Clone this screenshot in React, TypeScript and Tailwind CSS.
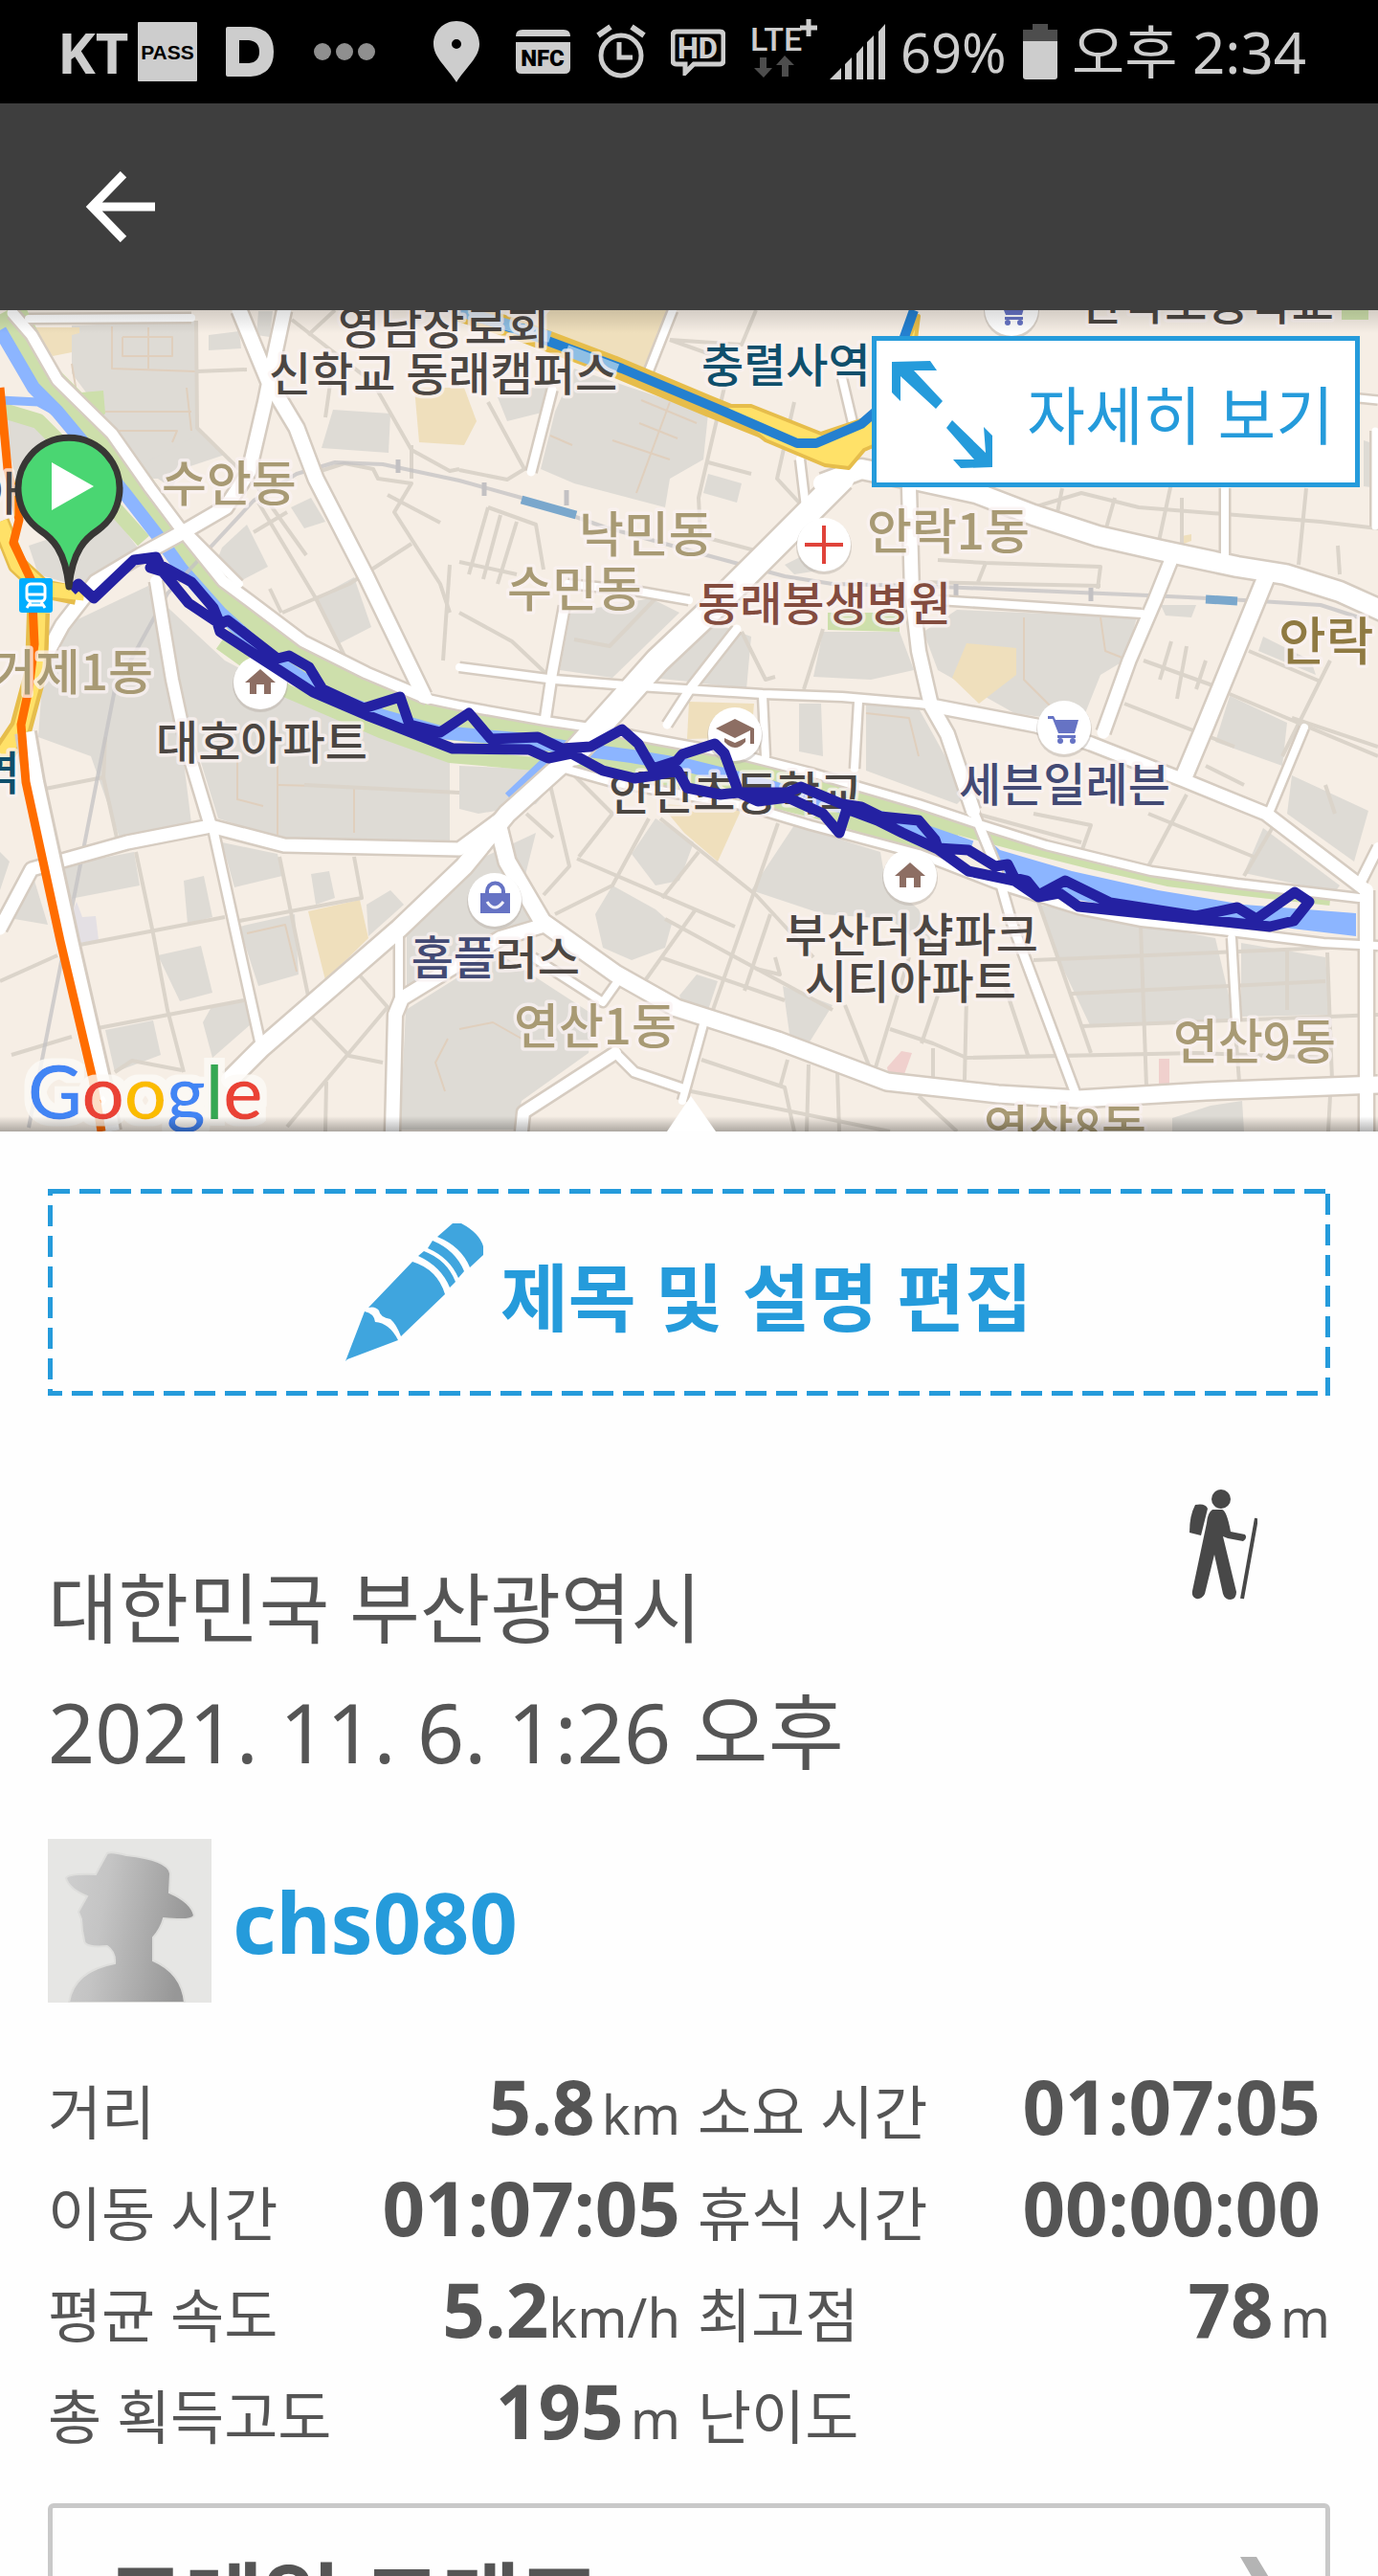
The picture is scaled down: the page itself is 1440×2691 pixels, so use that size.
import React from "react";

const KR = '"Noto Sans CJK KR", sans-serif';

/* ------------------------------------------------------------------ */
/* Map data                                                            */
/* ------------------------------------------------------------------ */

const blocks = [
  "75,340 205,335 205,448 235,475 160,500 120,450 75,390",
  "120,500 205,455 180,510 165,500",
  "218,350 250,346 252,364 218,366",
  "270,325 285,325 282,352 268,350",
  "348,428 408,432 406,473 336,468",
  "304,530 325,520 340,545 318,552",
  "232,572 258,548 280,592 238,614 225,590",
  "330,625 370,603 388,655 355,672",
  "0,420 40,440 60,480 20,520 12,480",
  "30,570 120,540 146,575 80,612 40,600",
  "165,625 235,690 320,735 425,780 470,790 470,878 300,878 228,855 205,780 175,680",
  "75,650 155,612 165,650 185,740 200,860 125,875 95,790 40,770 45,700",
  "57,906 140,890 146,925 68,940",
  "192,920 213,915 222,958 196,965",
  "165,998 210,988 222,1037 188,1046",
  "250,968 308,955 312,1018 270,1030",
  "232,880 290,892 295,915 245,927",
  "325,913 344,910 350,938 330,945",
  "110,1076 160,1066 168,1102 120,1120",
  "212,1068 222,1050 255,1045 262,1070 222,1105",
  "383,945 408,930 422,945 385,978",
  "15,960 33,910 50,966",
  "425,970 485,905 560,870 545,930 560,965 500,985 425,1035",
  "424,1055 520,995 620,1060 615,1100 545,1150 538,1180 418,1180",
  "480,800 590,805 560,840 500,850 480,845",
  "600,385 740,432 735,480 700,500 695,530 600,505 565,490 580,430",
  "740,495 775,505 770,525 735,515",
  "520,415 575,400 570,430 530,440",
  "596,640 680,625 710,640 640,708 585,700",
  "745,650 785,665 780,720 720,712 680,708",
  "860,660 940,660 955,700 910,710 850,707",
  "820,590 850,575 862,595 830,600",
  "1000,637 1188,645 1175,690 1150,705 1130,755 1060,745 980,700 965,660",
  "1213,632 1250,632 1245,645 1218,643",
  "835,735 858,735 860,790 835,785",
  "905,735 960,740 1010,830 1000,840 905,805",
  "1320,665 1370,690 1375,705 1315,680",
  "1425,460 1440,465 1440,510 1425,508",
  "1285,727 1345,755 1340,800 1270,775",
  "1350,810 1430,847 1415,900 1345,850",
  "1320,865 1400,925 1395,932 1300,912",
  "660,892 685,855 725,880 710,920 685,925",
  "622,955 640,925 685,950 702,965 695,990 660,1003 630,990",
  "710,1040 728,1018 750,1025 740,1055 712,1045",
  "830,862 920,890 925,920 960,950 980,1000 930,960 860,955 785,930",
  "818,1030 870,1050 845,1090 825,1080",
  "1085,945 1270,980 1290,1065 1140,1073 1110,1010",
  "1297,985 1385,1000 1390,1060 1297,1062",
  "1265,1155 1298,1150 1300,1182 1225,1182 1225,1168",
  "0,890 10,900 0,930",
];

const sand = [
  "35,342 83,342 83,348 75,350 75,368 55,372",
  "575,324 703,324 675,390 560,340",
  "433,405 485,405 498,440 485,465 438,462",
  "1010,672 1062,677 1062,705 1023,735 995,708",
  "322,952 376,940 385,980 340,1024",
  "690,840 775,845 750,900 715,870",
  "720,733 788,735 785,770 718,772",
  "1235,560 1245,558 1245,565 1232,570",
];

const parks = [
  "85,410 108,408 110,432 100,440",
  "865,640 940,640 940,660 865,658",
  "1402,324 1430,324 1430,334 1402,334",
];

const minor = [
  "205,335 206,447 270,510 320,580",
  "205,388 258,386",
  "305,334 390,400 430,470 470,492 480,490",
  "350,324 322,350",
  "348,380 340,436",
  "335,492 360,484 390,490 395,500 430,505 412,535 460,610 470,640",
  "405,517 460,546",
  "430,465 430,500",
  "270,525 330,625 360,685",
  "265,556 300,535",
  "295,640 365,610 430,568",
  "282,615 294,640",
  "470,590 463,690",
  "480,640 535,670 570,703",
  "510,530 560,548 568,595",
  "510,530 490,600",
  "523,538 505,605",
  "540,545 520,610",
  "480,587 540,600",
  "510,420 548,490 530,501 480,491",
  "700,355 770,380",
  "790,324 775,360 700,355",
  "758,400 730,520 732,560 800,578",
  "740,483 785,495",
  "830,420 812,500 835,525",
  "775,660 800,710 810,707",
  "600,668 637,675 690,620",
  "860,657 840,720",
  "1025,513 1080,530 1130,515 1190,530 1380,545 1440,552",
  "1110,510 1103,545",
  "1165,520 1155,555",
  "1225,500 1210,570",
  "1235,520 1235,575",
  "1365,510 1357,590",
  "1398,570 1400,600",
  "980,585 1030,588 1150,592 1147,615",
  "1030,588 1022,608",
  "960,608 1150,612",
  "1195,690 1270,717",
  "1175,735 1290,780",
  "1240,675 1230,730",
  "1224,670 1212,710",
  "1260,690 1250,720",
  "1305,680 1380,712",
  "1390,690 1340,790",
  "1285,725 1440,790",
  "1260,800 1300,820",
  "1385,820 1395,850",
  "1330,864 1300,915",
  "1020,850 1130,880",
  "1080,850 1140,862 1130,890",
  "1200,850 1310,895",
  "1240,830 1200,905",
  "1350,750 1440,780",
  "42,825 108,812 122,875",
  "110,770 108,815",
  "78,988 235,958",
  "142,890 160,975 175,1055 192,1120",
  "97,1075 255,1045",
  "292,895 322,1040",
  "250,962 378,938 370,895",
  "318,820 480,828",
  "0,1025 60,998",
  "12,1102 75,1083",
  "325,1062 365,1103 400,1110",
  "375,1018 405,1052 300,1177",
  "341,1130 340,1182",
  "120,1120 138,1108 190,1118",
  "575,820 595,905 568,935",
  "600,810 640,850 605,895",
  "550,850 578,875",
  "603,897 768,968",
  "678,855 640,925 580,955",
  "690,855 790,935 850,1000",
  "730,890 692,938",
  "813,860 745,1055",
  "727,950 675,1023",
  "695,960 870,1055",
  "690,1000 820,1045",
  "805,955 778,1035",
  "810,1000 815,1018 790,1012",
  "733,1107 820,1136 830,1182",
  "823,1107 815,1136",
  "722,1140 930,1182",
  "845,1112 843,1182",
  "875,1120 877,1182",
  "883,1050 908,1113",
  "950,1000 915,1115",
  "930,1075 975,1090 1010,1105 1250,1100 1390,1105",
  "1050,1030 1075,1105",
  "1010,1040 1008,1128",
  "980,1040 963,1090",
  "975,1095 975,1125",
  "1080,1003 1390,990",
  "1192,968 1198,1135",
  "1085,942 1140,1100",
  "1120,1038 1385,1025",
  "1345,990 1345,1055",
  "1387,995 1392,1128",
  "1290,1065 1295,1130",
  "1130,1072 1440,1060",
  "1390,1145 1388,1182",
  "960,1145 1000,1182",
];

const alleys = [
  "117,341 117,385 205,388",
  "128,352 180,352 180,372 128,372 128,352",
  "155,342 155,385",
  "75,380 85,440",
  "110,430 200,430",
  "115,450 185,450 180,462",
  "195,405 200,450",
  "575,455 598,465",
  "670,418 728,442",
  "668,442 708,458",
  "700,420 665,515",
  "640,460 700,480",
  "1070,645 1070,710 1100,740",
  "1150,645 1155,680 1180,690",
  "248,790 248,835 275,842",
  "290,800 290,875",
  "290,820 370,822 370,870",
  "258,975 298,966 310,1015",
  "468,1085 455,1110 465,1140",
  "480,1075 515,1068 545,1085",
  "905,745 950,750 960,790",
];

const roads: { w: number; d: string }[] = [
  { w: 8, d: "30,333 200,332" },
  { w: 8, d: "703,324 677,390" },
  { w: 9, d: "577,407 555,493" },
  { w: 8, d: "593,610 663,617 720,627" },
  { w: 8, d: "880,395 893,450" },
  { w: 8, d: "836,480 842,530" },
  { w: 10, d: "590,633 577,703 570,750" },
  { w: 9, d: "770,657 723,717 697,757" },
  { w: 12, d: "163,607 170,650 180,710 195,780 220,863" },
  { w: 9, d: "222,863 247,977 272,1090" },
  { w: 13, d: "0,970 33,908 133,880 220,863 297,883 480,887 530,850" },
  { w: 8, d: "417,977 417,1050" },
  { w: 8, d: "557,1000 630,1047 647,1023" },
  { w: 9, d: "643,1100 663,1120 713,1137" },
  { w: 12, d: "643,1100 547,1162 545,1182" },
  { w: 8, d: "735,1070 713,1150" },
  { w: 14, d: "567,967 523,980 420,1043 413,1060 410,1182" },
  { w: 8, d: "1287,980 1292,1067" },
  { w: 8, d: "1363,760 1327,847" },
  { w: 8, d: "1280,510 1280,585" },
  { w: 7, d: "1420,416 1440,418" },
  { w: 7, d: "1437,450 1437,550" },
  { w: 8, d: "980,627 1193,641" },
  { w: 8, d: "797,727 800,790" },
  { w: 8, d: "897,733 893,803" },
  { w: 8, d: "480,697 580,710 667,717 797,725 880,728 960,735 977,737" },
  { w: 11, d: "13,327 33,350 60,397 117,453 157,510 187,550 233,607 260,627 317,670 383,703 447,730" },
  { w: 8, d: "200,560 250,610" },
  { w: 8, d: "447,730 480,737 570,753 630,762 687,773 780,790 847,807 960,840 1020,860 1093,883 1203,910 1293,923 1420,938" },
  { w: 8, d: "590,803 640,817 780,842 847,862 960,892 1040,923 1127,950 1193,963 1277,972 1383,985 1440,988" },
  { w: 15, d: "250,324 280,397 310,447 330,500 383,603 443,727" },
  { w: 14, d: "297,324 285,380 277,420 260,493 236,530 193,555 147,580 100,608 65,653 45,690" },
  { w: 14, d: "950,510 953,620 960,680 973,737 990,767 1017,847" },
  { w: 9, d: "1017,847 1040,903 1057,963 1123,1140" },
  { w: 13, d: "973,737 1083,758 1140,777 1237,815 1323,850 1425,928" },
  { w: 13, d: "1223,587 1207,627 1180,690 1153,765" },
  { w: 17, d: "1323,603 1260,757 1237,812" },
  { w: 10, d: "1420,925 1440,885" },
  { w: 14, d: "1428,930 1428,1182" },
  { w: 17, d: "520,860 530,900 567,963 643,1017 707,1053 813,1087 927,1130 1043,1143 1127,1148 1260,1140 1440,1133" },
  { w: 18, d: "240,1128 273,1095 417,970 485,905 530,850 600,787" },
  { w: 25, d: "600,787 647,735 687,690 740,640 800,580 840,540 880,500" },
  { w: 20, d: "860,505 900,490 960,502 1020,515 1080,538 1147,560 1213,575 1293,592 1343,600 1400,618 1460,645" },
];

const track =
  "75,617 82,610 98,625 140,585 163,582 167,590 200,608 223,635 230,652 238,648 290,688 302,685 323,697 337,720 380,740 418,728 428,757 460,765 490,745 513,772 562,770 587,782 617,780 650,762 667,777 682,803 707,795 713,788 747,777 757,787 772,828 823,828 837,822 880,840 900,843 920,853 960,857 977,877 980,886 1012,888 1040,905 1053,903 1060,917 1073,920 1085,935 1113,920 1160,943 1250,957 1293,948 1313,960 1353,932 1368,942 1352,962 1327,968 1250,960 1127,947 1107,933 1085,937 1060,920 1012,910 980,887 943,870 917,857 885,845 877,870 860,850 823,833 792,837 772,828 753,830 718,823 708,805 685,810 663,813 630,805 597,787 573,792 553,783 480,782 473,782 383,747 327,723 230,660 227,650 197,630 170,597 157,593 163,584";

const river =
  "0,345 35,405 60,430 100,478 130,515 165,560 190,595 230,640 280,685 340,725 400,748 460,765 540,772 600,782 660,790 720,800 780,815 840,832 900,848 960,866 1015,885";

type Label = {
  x: number;
  y: number;
  t: string;
  c: string;
  s?: number;
  end?: boolean;
};

const DISTRICT = "#a89a74";
const DARK = "#4b4642";
const SHOP = "#434a74";
const STATION = "#0f4f6c";

const labels: Label[] = [
  { x: 353, y: 359, t: "영남장로회", c: DARK },
  { x: 281, y: 408, t: "신학교 동래캠퍼스", c: DARK },
  { x: 733, y: 399, t: "충렬사역", c: STATION },
  { x: 1129, y: 334, t: "안락초등학교", c: DARK },
  { x: 169, y: 524, t: "수안동", c: DISTRICT, s: 51 },
  { x: 160, y: 721, t: "거제1동", c: DISTRICT, s: 51, end: true },
  { x: 605, y: 577, t: "낙민동", c: DISTRICT, s: 51 },
  { x: 530, y: 634, t: "수민동", c: DISTRICT, s: 51 },
  { x: 906, y: 574, t: "안락1동", c: DISTRICT, s: 51 },
  { x: 729, y: 648, t: "동래봉생병원", c: "#834c3f" },
  { x: 1336, y: 690, t: "안락", c: "#8f7a42", s: 54 },
  { x: 163, y: 793, t: "대호아파트", c: DARK },
  { x: 636, y: 846, t: "안민초등학교", c: DARK },
  { x: 1002, y: 837, t: "세븐일레븐", c: SHOP },
  { x: 606, y: 1018, t: "러스", c: DARK, end: true },
  { x: 518, y: 1018, t: "홈플", c: SHOP, end: true },
  { x: 820, y: 994, t: "부산더샵파크", c: DARK },
  { x: 841, y: 1043, t: "시티아파트", c: DARK },
  { x: 537, y: 1091, t: "연산1동", c: DISTRICT, s: 51 },
  { x: 1226, y: 1107, t: "연산9동", c: DISTRICT, s: 51 },
  { x: 1028, y: 1197, t: "연산8동", c: DISTRICT, s: 51 },
  { x: 21, y: 825, t: "역", c: STATION, end: true },
  { x: 20, y: 533, t: "아", c: DARK, end: true },
];

/* ------------------------------------------------------------------ */
/* Map drawing                                                         */
/* ------------------------------------------------------------------ */

function Disc({ x, y, children }: { x: number; y: number; children: React.ReactNode }) {
  return (
    <g transform={`translate(${x} ${y})`}>
      <circle cy="2" r="29" fill="#b9b2a9" opacity="0.5" />
      <circle r="28" fill="#fff" />
      {children}
    </g>
  );
}

const House = () => (
  <path d="M0-14 16 0H11V12H4V2H-4V12H-11V0H-16Z" fill="#8d6e63" />
);

const Cart = () => (
  <g fill="#6673c4">
    <path d="M-17-12H-11L-9-8H15L11 6H-6L-12-9H-17Z" />
    <path d="M-7 8H12V11H-7Z" />
    <circle cx="-4" cy="14" r="3" />
    <circle cx="9" cy="14" r="3" />
  </g>
);

function RouteMap() {
  return (
    <svg
      viewBox="0 324 1440 858"
      preserveAspectRatio="xMidYMid slice"
      className="block h-full w-full"
      role="img"
      aria-label="경로 지도"
    >
      <defs>
        <linearGradient id="shadeTop" x1="0" y1="0" x2="0" y2="1">
          <stop offset="0" stopColor="#000" stopOpacity="0.14" />
          <stop offset="1" stopColor="#000" stopOpacity="0" />
        </linearGradient>
        <linearGradient id="shadeBottom" x1="0" y1="0" x2="0" y2="1">
          <stop offset="0" stopColor="#000" stopOpacity="0" />
          <stop offset="1" stopColor="#000" stopOpacity="0.3" />
        </linearGradient>
        <filter id="halo" x="-10%" y="-20%" width="120%" height="140%">
          <feMorphology in="SourceAlpha" operator="dilate" radius="7" result="grown" />
          <feFlood floodColor="#fcfaf6" floodOpacity="0.8" />
          <feComposite in2="grown" operator="in" />
          <feMerge>
            <feMergeNode />
            <feMergeNode in="SourceGraphic" />
          </feMerge>
        </filter>
      </defs>
      <rect x="0" y="324" width="1440" height="858" fill="#f6eee5" />
      {blocks.map((p) => (
        <polygon key={p} points={p} fill="#dedbd5" />
      ))}
      {sand.map((p) => (
        <polygon key={p} points={p} fill="#efdfbc" />
      ))}
      {parks.map((p) => (
        <polygon key={p} points={p} fill="#cddfab" />
      ))}
      <polygon points="73,960 80,942 86,958 100,957 103,982 78,986" fill="#e4e0e4" />
      <polygon points="927,1115 942,1098 953,1100 945,1122 928,1120" fill="#f0d0cd" />
      <rect x="1211" y="1106" width="11" height="26" fill="#f0d0cd" />

      <g fill="none" strokeLinejoin="round">
        {alleys.map((p) => (
          <polyline key={p} points={p} stroke="#e0cfbd" strokeWidth="2" />
        ))}
        {minor.map((p) => (
          <polyline key={p} points={p} stroke="#dbd4ca" strokeWidth="4" />
        ))}

        {/* river banks and water */}
        <polyline
          points="8,324 45,395 90,440 130,490 170,545 215,605 260,655 340,710 400,738 470,755 560,765 660,785 780,810 900,845 1000,876"
          stroke="#cddfab"
          strokeWidth="36"
        />
        <polyline
          points="0,428 40,440 70,470 110,520 150,565"
          stroke="#cddfab"
          strokeWidth="16"
        />
        <polyline
          points="1000,866 1060,882 1140,902 1220,920 1300,930 1390,940"
          stroke="#cddfab"
          strokeWidth="12"
        />
        <polyline
          points="230,672 300,722 400,765 470,790 560,798 640,805 760,825 860,850 980,888"
          stroke="#cddfab"
          strokeWidth="14"
        />
        <polyline points="0,418 40,420 62,432" stroke="#8cb5ff" strokeWidth="9" />
        <polyline points={river} stroke="#8cb5ff" strokeWidth="14" />
        <polyline points="572,795 532,833" stroke="#8cb5ff" strokeWidth="12" />
        <polygon
          points="1030,875 1045,888 1120,910 1210,930 1300,945 1417,954 1417,978 1350,970 1300,962 1180,950 1100,935 1045,912"
          fill="#8cb5ff"
        />

        {/* railway */}
        <g stroke="#c3c1c3">
          <polyline points="30,1178 120,720 175,620 265,523 310,495 350,483 400,485 480,502 545,520 630,550 720,575 820,602 870,610 960,612 1200,622 1300,627 1380,632 1420,645" strokeWidth="4" opacity="0.75" />
          <path d="M416 480v14M506 504v14M592 512v16M999 610v14M1140 614v14" strokeWidth="5" />
        </g>
        <path d="M545 522 602 538M1260 626 1293 628" stroke="#7aa7cc" strokeWidth="9" />

        {roads.map((r) => (
          <polyline key={r.d} points={r.d} stroke="#d6ccc1" strokeWidth={r.w + 5} />
        ))}
        {roads.map((r) => (
          <polyline key={r.d} points={r.d} stroke="#fff" strokeWidth={r.w} strokeLinecap="round" />
        ))}

        {/* trunk roads */}
        <polyline points="480,325 545,346 640,382 740,424 800,448 850,464" stroke="#e6bd4b" strokeWidth="22" />
        <path d="M755 424 785 424 858 453 915 434 960 330 945 452 903 470 887 489 862 486 800 460Z" fill="#ffe168" stroke="#e6bd4b" strokeWidth="4" />
        <polyline points="480,325 545,346 650,385 750,427 833,463 853,463 900,443 915,430 935,380 955,324" stroke="#2480d0" strokeWidth="10" />
        <path d="M480 325 575 352M592 366 645 386" stroke="#8fbfe4" strokeWidth="12" />

        <polyline points="0,545 18,590 45,615 80,622" stroke="#e6bd4b" strokeWidth="20" />
        <polyline points="0,545 18,590 45,615 88,620" stroke="#ffe168" strokeWidth="15" />
        <polyline points="40,640 38,700 22,760 -5,800" stroke="#e6bd4b" strokeWidth="24" />
        <polyline points="40,640 38,700 22,760 -5,800" stroke="#ffe168" strokeWidth="15" />
        <polyline points="27,765 36,817 72,983 108,1140 116,1182" stroke="#d6ccc1" strokeWidth="24" />
        <polyline points="27,765 36,817 72,983 108,1140 116,1182" stroke="#fff" strokeWidth="18" />
        <polyline points="0,405 8,490 20,543 14,567 33,607 36,673 30,720 22,757 27,817 63,983 97,1127 106,1182" stroke="#ff6d00" strokeWidth="9" />
      </g>

      {/* place names */}
      <g
        stroke="#faf2f2"
        strokeWidth="7"
        strokeLinejoin="round"
        fontWeight="500"
        style={{ fontFamily: KR, paintOrder: "stroke" }}
      >
        {labels.map((l) => (
          <text
            key={l.t + l.y}
            x={l.x}
            y={l.y}
            fontSize={l.s ?? 48}
            fill={l.c}
            textAnchor={l.end ? "end" : "start"}
            strokeOpacity="0.75"
          >
            {l.t}
          </text>
        ))}
      </g>

      <Disc x={272} y={713}><House /></Disc>
      <Disc x={951} y={915}><House /></Disc>
      <Disc x={1112} y={760}><Cart /></Disc>
      <Disc x={1057} y={323}><Cart /></Disc>
      <Disc x={861} y={569}>
        <path d="M0-20V20M-20 0H20" stroke="#e0433a" strokeWidth="4" />
      </Disc>
      <Disc x={768} y={767}>
        <path d="M0-16 20-6V10H16V-4L0 4-20-6Z" fill="#8d6e63" />
        <path d="M-11 4 0 9 11 4V8Q0 20-11 8Z" fill="#8d6e63" />
      </Disc>
      <Disc x={517} y={940}>
        <path d="M-15-7H16V14H-15Z" fill="#6673c4" />
        <path d="M-8-6V-9A8 8 0 0 1 9-9V-6" fill="none" stroke="#6673c4" strokeWidth="4" />
        <path d="M-8 2Q0 14 9 2" fill="none" stroke="#f3f3fa" strokeWidth="3" />
      </Disc>

      {/* metro stop */}
      <g transform="translate(20 604)">
        <rect width="35" height="36" rx="3" fill="#00adff" />
        <rect x="8" y="6" width="19" height="18" rx="4" fill="none" stroke="#fff" strokeWidth="3" />
        <path d="M9 17H26M12 25 8 31M23 25 27 31M11 28H24" stroke="#fff" strokeWidth="3" />
      </g>

      <polyline points={track} fill="none" stroke="#2421a2" strokeWidth="11" strokeLinejoin="round" strokeLinecap="butt" />

      {/* start marker */}
      <g transform="translate(72 508)">
        <path
          d="M0 105C-4 66-18 54-30 46A53 53 0 1 1 30 46C18 54 4 66 0 105Z"
          fill="#4ad672"
          stroke="#383735"
          strokeWidth="7"
          strokeLinejoin="round"
        />
        <path d="M-18-25 26 0-18 25Z" fill="#fff" />
      </g>

      {/* map provider */}
      <text x="29" y="1169" fontSize="78" fontWeight="500" filter="url(#halo)" style={{ fontFamily: "Lato, sans-serif" }}>
        <tspan fill="#4285f4">G</tspan>
        <tspan fill="#ea4335">o</tspan>
        <tspan fill="#fbbc05">o</tspan>
        <tspan fill="#4285f4">g</tspan>
        <tspan fill="#34a853">l</tspan>
        <tspan fill="#ea4335">e</tspan>
      </text>

      <rect x="0" y="324" width="1440" height="24" fill="url(#shadeTop)" />
      <rect x="0" y="1166" width="1440" height="16" fill="url(#shadeBottom)" />
      <path d="M697 1182 722 1145 748 1182Z" fill="#fff" />
    </svg>
  );
}

/* ------------------------------------------------------------------ */
/* Status bar                                                          */
/* ------------------------------------------------------------------ */

function StatusBar() {
  return (
    <div className="flex h-[108px] shrink-0 items-center bg-black pl-[60px] pr-[66px] text-[#cdcdcd]">
      <span className="text-[60px] leading-[64px] font-bold">KT</span>
      <svg className="ml-[10px]" width="62" height="62" viewBox="0 0 62 62" role="img" aria-label="PASS">
        <rect width="62" height="62" rx="1" fill="#cdcdcd" />
        <text x="31" y="39" fontSize="21" fontWeight="700" textAnchor="middle" fill="#000" style={{ fontFamily: '"Liberation Sans"' }}>
          PASS
        </text>
      </svg>
      <svg className="ml-[30px]" width="50" height="52" viewBox="0 0 50 52" aria-hidden="true">
        <path fillRule="evenodd" fill="#cdcdcd" d="M2 0H26Q50 2 50 26T26 52H2Q0 52 0 50V2Q0 0 2 0ZM14 14V38H24Q35 37 35 26T24 14Z" />
      </svg>
      <svg className="ml-[42px]" width="64" height="18" viewBox="0 0 64 18" aria-hidden="true">
        <g fill="#8f8f8f">
          <circle cx="9" cy="9" r="9" />
          <circle cx="32" cy="9" r="9" />
          <circle cx="55" cy="9" r="9" />
        </g>
      </svg>

      <svg className="ml-auto" width="48" height="64" viewBox="0 0 48 64" aria-hidden="true">
        <path fillRule="evenodd" fill="#cdcdcd" d="M24 0C38 0 48 11 48 24 48 38 34 48 24 64 14 48 0 38 0 24 0 11 10 0 24 0ZM24 19A5 5 0 1 0 24 29 5 5 0 1 0 24 19Z" />
      </svg>
      <svg className="ml-[38px]" width="57" height="46" viewBox="0 0 57 46" role="img" aria-label="NFC">
        <path fill="#cdcdcd" d="M0 7Q0 0 7 0H50Q57 0 57 7ZM0 13H57V40Q57 46 51 46H6Q0 46 0 40Z" />
        <text x="28" y="38" fontSize="24" fontWeight="900" textAnchor="middle" fill="#000" style={{ fontFamily: "Roboto" }}>
          NFC
        </text>
      </svg>
      <svg className="ml-[27px]" width="52" height="58" viewBox="0 0 52 58" aria-hidden="true">
        <g fill="none" stroke="#cdcdcd">
          <circle cx="26" cy="33" r="21" strokeWidth="5" />
          <path d="M24 19V35H38" strokeWidth="5" />
          <path d="M2 12 15 3M50 12 37 3" strokeWidth="6" />
        </g>
      </svg>
      <svg className="ml-[26px]" width="57" height="50" viewBox="0 0 57 50" role="img" aria-label="HD">
        <path d="M6 4H51Q55 4 55 8V34Q55 38 51 38H24L15 47V38H6Q2 38 2 34V8Q2 4 6 4Z" fill="none" stroke="#cdcdcd" strokeWidth="5" />
        <text x="28" y="32" fontSize="31" fontWeight="800" textAnchor="middle" fill="#cdcdcd" style={{ fontFamily: "Roboto" }}>
          HD
        </text>
      </svg>
      <svg className="ml-[26px]" width="72" height="68" viewBox="0 0 72 68" role="img" aria-label="LTE+">
        <text x="0" y="33" fontSize="34" fontWeight="500" fill="#cdcdcd" style={{ fontFamily: "Roboto, sans-serif" }}>
          LTE
        </text>
        <path d="M61 0V18M52 9H70" stroke="#cdcdcd" strokeWidth="5" />
        <path d="M10 40H17V51H23L14 61 4 51H10ZM33 60V48H27L36 38 46 48H40V60Z" fill="#4d4d4d" />
      </svg>
      <svg className="ml-[11px]" width="58" height="58" viewBox="0 0 58 58" aria-hidden="true">
        <path fill="#cdcdcd" d="M0 58 12 46V58ZM16 42 23 35V58H16ZM28 31 35 23V58H28ZM39 19 46 12V58H39ZM51 8 58 0V58H51Z" />
      </svg>
      <span className="ml-[16px] w-[116px] text-[56px] leading-[64px]">69%</span>
      <svg className="ml-[12px]" width="36" height="58" viewBox="0 0 36 58" aria-hidden="true">
        <path fill="#4d4d4d" d="M10 0H26V6H36V20H0V6H10Z" />
        <path fill="#cdcdcd" d="M0 18H36V55Q36 58 33 58H3Q0 58 0 55Z" />
      </svg>
      <span className="ml-[15px] w-[254px] text-[60px] leading-[64px] whitespace-nowrap">오후 2:34</span>
    </div>
  );
}

/* ------------------------------------------------------------------ */
/* Page                                                                */
/* ------------------------------------------------------------------ */

const stats: { label: string; value: string; unit?: string; tight?: boolean; inset?: boolean }[] = [
  { label: "거리", value: "5.8", unit: "km" },
  { label: "소요 시간", value: "01:07:05", inset: true },
  { label: "이동 시간", value: "01:07:05" },
  { label: "휴식 시간", value: "00:00:00", inset: true },
  { label: "평균 속도", value: "5.2", unit: "km/h", tight: true },
  { label: "최고점", value: "78", unit: "m" },
  { label: "총 획득고도", value: "195", unit: "m" },
  { label: "난이도", value: "\u00a0" },
];

export default function App() {
  return (
    <div className="flex h-screen flex-col overflow-hidden bg-[#fefefe] font-['Noto_Sans','Noto_Sans_CJK_KR',sans-serif] text-[#555555]">
      <StatusBar />
      <header className="flex h-[216px] shrink-0 items-center bg-[#3e3e3e] pl-[88px]">
        <button type="button" aria-label="뒤로" className="text-white">
          <svg width="76" height="74" viewBox="0 0 76 74" aria-hidden="true">
            <path d="M41 3 8 37 41 71M8 37H74" fill="none" stroke="#fff" strokeWidth="9" />
          </svg>
        </button>
      </header>

      <main className="min-h-0 flex-1 overflow-y-auto [scrollbar-width:none]">
        <section className="relative h-[858px]">
          <RouteMap />
          <button
            type="button"
            className="absolute top-[27px] right-[19px] flex h-[158px] w-[510px] items-center justify-between border-[5px] border-[#259bdb] bg-white pt-[6px] pr-[22px] pl-[16px] text-[#259bdb]"
          >
            <svg width="106" height="112" viewBox="0 0 106 112" aria-hidden="true">
              <g fill="#259bdb">
                <path d="M0 1 40 0 47 10H23L53 42 46 50 9 16V42L0 33Z" />
                <path d="M105 111 72 112 64 103H86L57 70 63 62 98 96 96 69 105 78Z" />
              </g>
            </svg>
            <span className="text-[66px] leading-[80px] whitespace-nowrap">자세히 보기</span>
          </button>
        </section>

        <div className="px-[50px]">
          <button
            type="button"
            className="relative mt-[60px] flex h-[216px] w-full items-center justify-center gap-[18px] text-[77px] leading-[96px] font-bold text-[#259bdb]"
          >
            <svg className="absolute inset-0 h-full w-full" aria-hidden="true">
              <rect x="0" y="0" width="100%" height="100%" fill="none" stroke="#259bdb" strokeWidth="10" strokeDasharray="22 10" strokeDashoffset="-1" />
            </svg>
            <svg width="144" height="144" viewBox="0 0 144 144" aria-hidden="true">
              <g fill="#3fa5de">
                <path d="M0 144 20 92Q30 94 31 103 46 104 55 122L2 142Z" />
                <path d="M24 88 70 40Q96 48 104 74L58 118Q53 105 47 100 36 98 35 91 31 86 24 88Z" />
                <path d="M76 34 82 29Q106 38 115 61L109 67Q100 45 76 34Z" />
                <path d="M86 26 91 18Q115 28 124 50L118 57Q109 36 86 26Z" />
                <path d="M96 14 112 0H121Q140 10 144 24V33L130 46Q121 24 96 14Z" />
              </g>
            </svg>
            <span className="pt-[12px]">제목 및 설명 편집</span>
          </button>

          <div className="mt-[97px] flex items-start justify-between">
            <div className="pt-[59px] leading-[130px]">
              <h1 className="text-[80px]">대한민국 부산광역시</h1>
              <p className="text-[86px]">2021. 11. 6. 1:26 오후</p>
            </div>
            <svg className="mr-[76px]" width="74" height="118" viewBox="0 0 74 118" role="img" aria-label="등산">
              <g fill="#484848">
                <circle cx="36" cy="11" r="10" />
                <path d="M9 17Q20 15 22 21L15 49 3 46Q3 28 9 17Z" />
                <path d="M27 22H37Q42 23 46 45L61 48Q64 52 59 55L43 52 38 50 52 108Q52 115 46 116 40 116 38 110L29 69 19 110Q16 116 10 115 5 113 6 107L21 36Q22 25 27 22Z" />
              </g>
              <path d="M73 31 58 115" stroke="#484848" strokeWidth="4" />
            </svg>
          </div>

          <div className="mt-[47px] flex items-center gap-[22px]">
            <svg width="171" height="171" viewBox="0 0 171 171" role="img" aria-label="프로필 사진">
              <defs>
                <linearGradient id="figure" x1="0" y1="0" x2="1" y2="0.2">
                  <stop offset="0" stopColor="#cfcfcf" />
                  <stop offset="0.35" stopColor="#c4c4c4" />
                  <stop offset="1" stopColor="#979797" />
                </linearGradient>
              </defs>
              <rect width="171" height="171" fill="#e6e6e4" />
              <path
                d="M62 15Q66 13 82 17 126 22 128 36L127 56Q150 66 153 80 151 86 121 83 118 94 110 103V127Q140 140 143 171H22Q27 138 70 130 71 118 62 112 38 114 38 106L36 96 35 84 32 76 41 60Q22 52 19 41 21 36 50 37Z"
                fill="url(#figure)"
                stroke="#dededc"
                strokeWidth="2"
              />
            </svg>
            <a href="#profile" className="text-[88px] leading-[110px] font-bold text-[#259bdb]">chs080</a>
          </div>

          <dl className="mt-[55px] grid grid-cols-2 gap-x-[18px]">
            {stats.map((s) => (
              <div key={s.label} className="flex h-[106px] items-baseline justify-between leading-[106px] whitespace-nowrap">
                <dt className="text-[61px]">{s.label}</dt>
                <dd className={s.inset ? "pr-[10px]" : ""}>
                  <span className="text-[78px] font-bold">{s.value}</span>
                  {s.unit && (
                    <span className={s.tight ? "text-[56px]" : "ml-[7px] text-[56px]"}>{s.unit}</span>
                  )}
                </dd>
              </div>
            ))}
          </dl>

          <a
            href="#trail-graph"
            className="mt-[44px] flex h-[204px] items-center justify-between rounded-[6px] border-[5px] border-[#c9c9c9] pr-[44px] pl-[56px] text-[89px] leading-[120px] font-bold"
          >
            트레일 그래프
            <svg width="45" height="92" viewBox="0 0 45 92" aria-hidden="true">
              <path d="M0 0H17L45 46 17 92H0L27 46Z" fill="#b4b4b4" />
            </svg>
          </a>
        </div>
      </main>
    </div>
  );
}
